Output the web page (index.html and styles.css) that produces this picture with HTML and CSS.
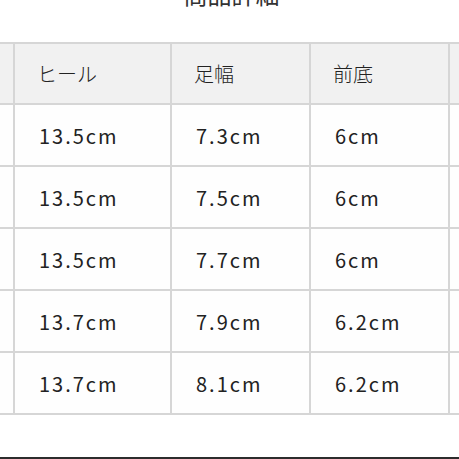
FILE: index.html
```html
<!DOCTYPE html>
<html lang="ja">
<head>
<meta charset="utf-8">
<link rel="stylesheet" href="styles.css">
</head>
<body>
<div class="title">商品詳細</div>
<div class="table">
  <div class="cell head"></div><div class="cell head">ヒール</div><div class="cell head">足幅</div><div class="cell head">前底</div><div class="cell head"></div>
  <div class="cell"></div><div class="cell">13.5cm</div><div class="cell">7.3cm</div><div class="cell">6cm</div><div class="cell"></div>
  <div class="cell"></div><div class="cell">13.5cm</div><div class="cell">7.5cm</div><div class="cell">6cm</div><div class="cell"></div>
  <div class="cell"></div><div class="cell">13.5cm</div><div class="cell">7.7cm</div><div class="cell">6cm</div><div class="cell"></div>
  <div class="cell"></div><div class="cell">13.7cm</div><div class="cell">7.9cm</div><div class="cell">6.2cm</div><div class="cell"></div>
  <div class="cell"></div><div class="cell">13.7cm</div><div class="cell">8.1cm</div><div class="cell">6.2cm</div><div class="cell"></div>
</div>
<div class="rule"></div>
</body>
</html>
```
FILE: styles.css
```css
html, body {
  margin: 0;
  padding: 0;
  background: #ffffff;
  overflow: hidden;
  width: 459px;
  height: 459px;
}
body {
  font-family: "Noto Sans CJK JP", "Noto Sans", sans-serif;
  color: #2a2a2a;
}
.title {
  margin-top: -18px;
  height: 24px;
  line-height: 24px;
  font-size: 24px;
  text-align: center;
  color: #333;
  padding-left: 4px;
}
.table {
  margin-top: 36px;
  margin-left: -143px;
  width: 760px;
  display: grid;
  grid-template-columns: 158px 157px 139px 139px 167px;
  border-top: 2px solid #d6d6d6;
}
.cell {
  box-sizing: border-box;
  height: 62px;
  border-right: 2px solid #d6d6d6;
  border-bottom: 2px solid #d6d6d6;
  padding-left: 24px;
  display: flex;
  align-items: center;
  font-size: 20px;
  font-weight: 400;
  letter-spacing: 2px;
  background: #fefefe;
  color: #222;
}
.cell.head {
  height: 61px;
  padding-left: 22px;
  background: #f1f1f1;
  letter-spacing: 0;
  font-weight: 300;
  color: #222;
}
.rule {
  margin-top: 42px;
  height: 2px;
  background: #2c2c2c;
}
```
